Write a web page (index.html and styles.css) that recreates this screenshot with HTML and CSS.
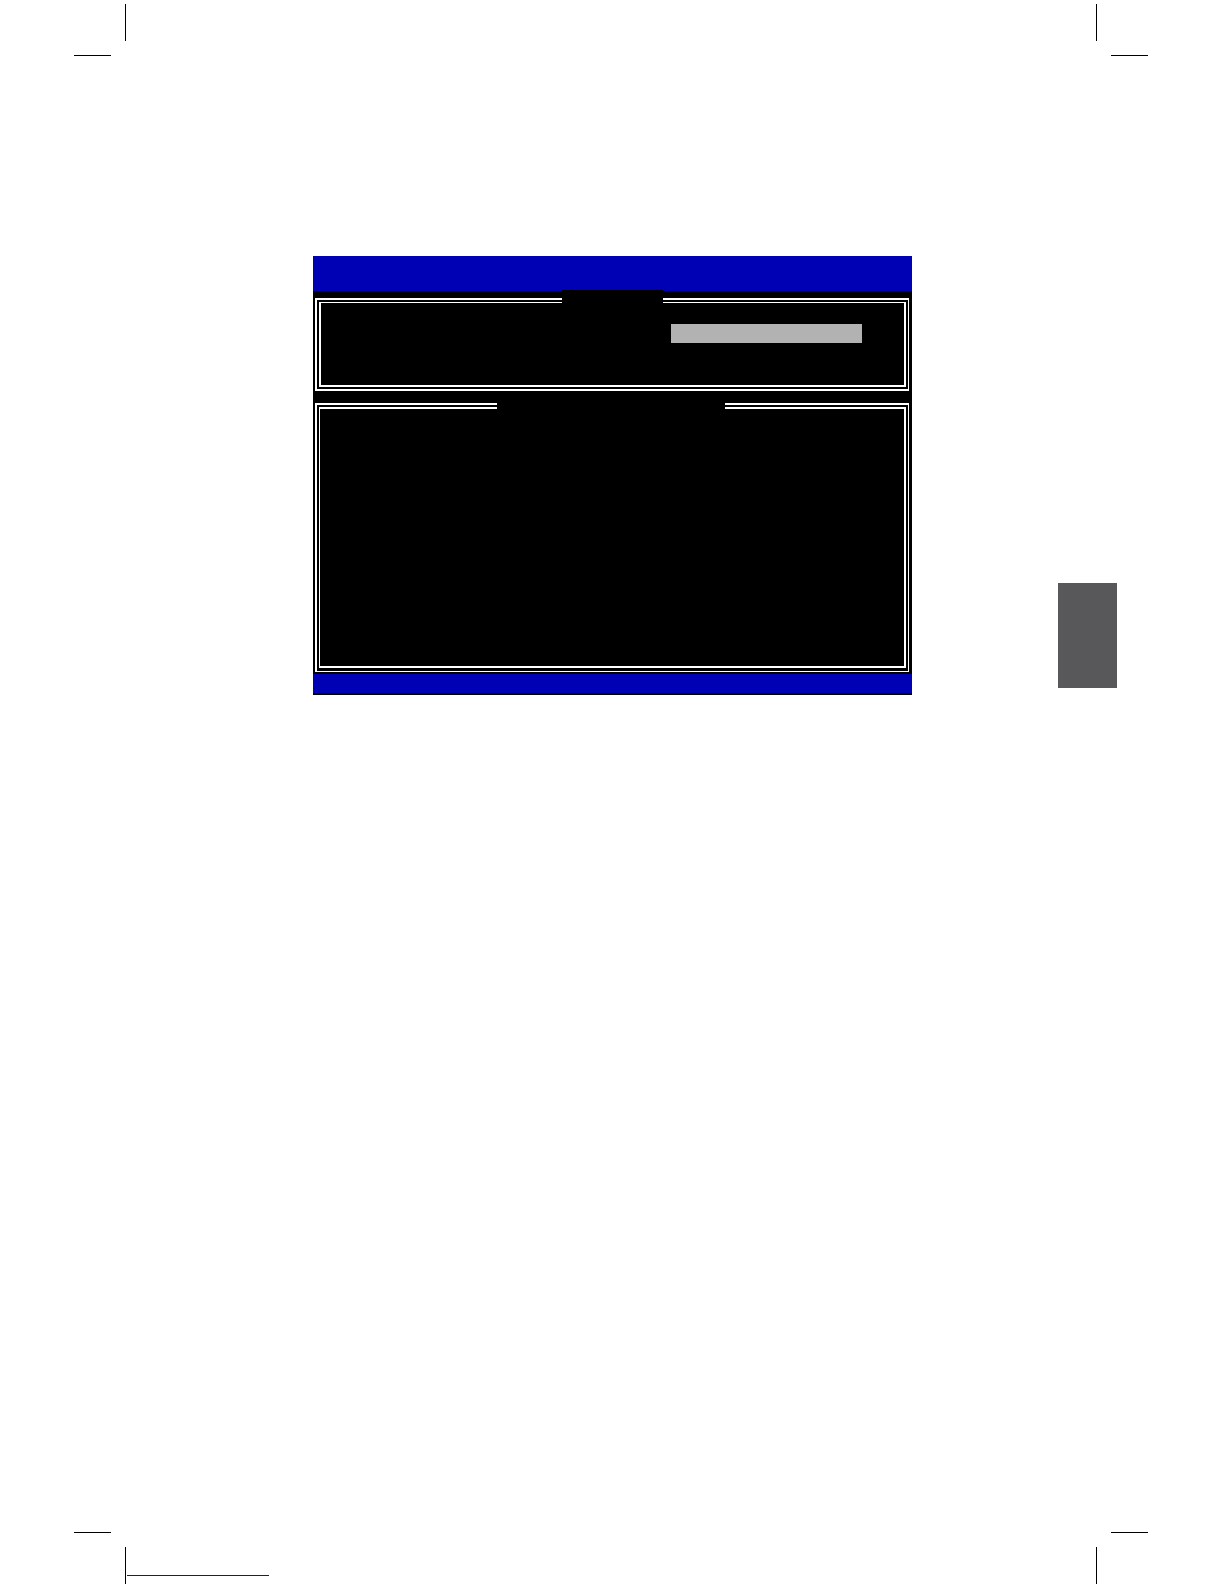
FILE: index.html
```html
<!DOCTYPE html>
<html lang="en">
<head>
  <meta charset="UTF-8">
  <meta name="viewport" content="width=device-width, initial-scale=1">
  <title>Setup</title>
  <link rel="stylesheet" href="styles.css">
</head>
<body>
  <header class="marks marks-top">
    <svg class="mark" viewBox="0 0 52 52"><path d="M51 0h1v37h-1zM0 51h37v1H0z"/></svg>
    <svg class="mark" viewBox="0 0 52 52"><path d="M0 0h1v37H0zM15 51h37v1H15z"/></svg>
  </header>

  <main class="content">
    <!-- Setup utility screen -->
    <div class="screen">
      <div class="screen-header"></div>

      <section class="panel panel-options">
        <div class="panel-title"></div>
        <div class="panel-body">
          <div class="selected-option"></div>
        </div>
      </section>

      <section class="panel panel-details">
        <div class="panel-title"></div>
        <div class="panel-body"></div>
      </section>

      <div class="screen-footer"></div>
    </div>

    <!-- Chapter tab on the page edge -->
    <div class="chapter-tab"></div>
  </main>

  <footer class="marks marks-bottom">
    <svg class="mark" viewBox="0 0 52 52"><path d="M51 15h1v37h-1zM0 0h37v1H0z"/></svg>
    <a class="footer-link" href="#"></a>
    <svg class="mark" viewBox="0 0 52 52"><path d="M0 15h1v37H0zM15 0h37v1H15z"/></svg>
  </footer>
</body>
</html>
```
FILE: styles.css
```css
* {
  box-sizing: border-box;
}

body {
  display: flex;
  flex-direction: column;
  min-height: 100vh;
  margin: 0;
  font-family: "Liberation Sans", Arial, sans-serif;
  background: #fff;
}

.marks {
  display: flex;
  justify-content: space-between;
  padding: 0 76px 0 74px;
}

.marks-top {
  padding-top: 4px;
}

.mark {
  display: block;
  flex: none;
  width: 52px;
  height: 52px;
  fill: #000;
}

.content {
  display: grid;
  grid-template-columns: 1fr minmax(0, 599px) 1fr;
  align-items: start;
  flex: 1;
  padding: 200px 107px 0 108px;
}

.screen {
  grid-column: 2;
  padding-bottom: 2px;
  background: #000;
}

.screen-header {
  height: 35px;
  background: #0000b4;
}

.screen-footer {
  height: 19px;
  background: #0000b4;
}

/* Double-line frame: outer border on the panel, inner one on its body */
.panel {
  position: relative;
  margin: 0 3px 0 2px;
  padding: 2px;
  border: 2px solid #fff;
  border-right-width: 1px;
}

.panel-options {
  margin-top: 7px;
}

.panel-details {
  margin-top: 12px;
  margin-bottom: 2px;
  padding-bottom: 3px;
  border-bottom-width: 1px;
}

.panel-body {
  display: flex;
  justify-content: flex-end;
  border: 2px solid #fff;
}

.panel-options .panel-body {
  height: 85px;
  padding: 21px 42px 0 0;
  border-top-width: 1px;
}

.panel-details .panel-body {
  height: 261px;
  border-left-width: 1px;
}

/* Breaks the top lines of the frame */
.panel-title {
  position: absolute;
  top: -10px;
  height: 18px;
  background: #000;
}

.panel-options .panel-title {
  left: calc(50% - 51px);
  width: 101px;
}

.panel-details .panel-title {
  left: calc(50% - 116px);
  width: 228px;
}

.selected-option {
  width: 191px;
  height: 19px;
  background: #b2b2b2;
}

.chapter-tab {
  grid-column: 3;
  justify-self: end;
  width: 59px;
  height: 105px;
  margin-top: 327px;
  background: #58585a;
}

.footer-link {
  align-self: flex-end;
  width: 142px;
  margin: 0 auto 8px 1px;
  border-bottom: 1px solid #1b1092;
}
```
